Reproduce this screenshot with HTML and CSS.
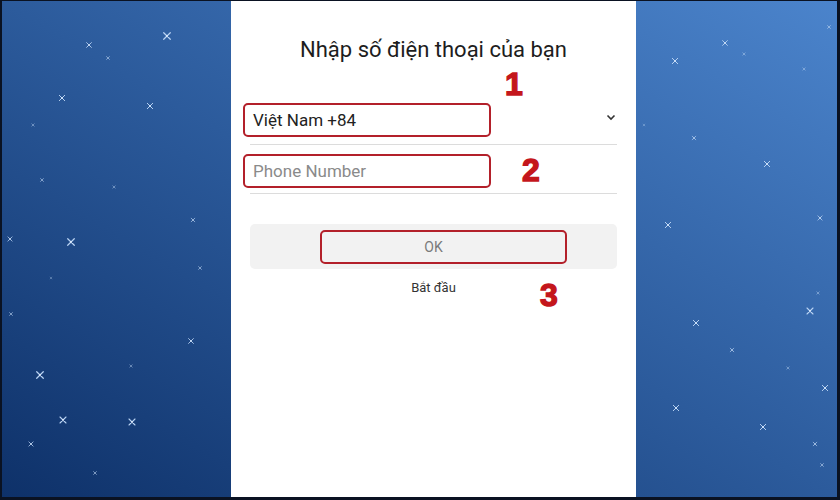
FILE: index.html
```html
<!DOCTYPE html>
<html lang="vi">
<head>
  <meta charset="UTF-8" />
  <meta name="viewport" content="width=device-width, initial-scale=1.0" />
  <title>Nhập số điện thoại</title>
  <link rel="stylesheet" href="styles.css">
</head>
<body>
  <div class="screen">
    <div class="side">
      <svg class="stars" width="229" height="496" viewBox="0 0 229 496">
        <defs>
          <g id="star">
            <path d="M-3 -3L3 3M-3 3L3 -3" stroke="#b9d3f3" stroke-width="1.1" stroke-linecap="round" />
            <circle r="0.9" fill="#e4efff" />
          </g>
        </defs>
        <use href="#star" transform="translate(165 35) scale(1.1)" />
        <use href="#star" transform="translate(87 44) scale(0.8)" />
        <use href="#star" transform="translate(106 57) scale(0.5)" />
        <use href="#star" transform="translate(60 97) scale(0.9)" />
        <use href="#star" transform="translate(148 105) scale(0.9)" />
        <use href="#star" transform="translate(31 124) scale(0.4)" />
        <use href="#star" transform="translate(40 179) scale(0.5)" />
        <use href="#star" transform="translate(112 186) scale(0.4)" />
        <use href="#star" transform="translate(191 219) scale(0.6)" />
        <use href="#star" transform="translate(8 238) scale(0.7)" />
        <use href="#star" transform="translate(69 241) scale(1.1)" />
        <use href="#star" transform="translate(198 267) scale(0.5)" />
        <use href="#star" transform="translate(49 277) scale(0.3)" />
        <use href="#star" transform="translate(9 313) scale(0.5)" />
        <use href="#star" transform="translate(189 340) scale(0.8)" />
        <use href="#star" transform="translate(38 374) scale(1.1)" />
        <use href="#star" transform="translate(129 365) scale(0.4)" />
        <use href="#star" transform="translate(61 419) scale(1)" />
        <use href="#star" transform="translate(130 421) scale(1)" />
        <use href="#star" transform="translate(29 443) scale(0.7)" />
        <use href="#star" transform="translate(93 472) scale(0.5)" />
      </svg>
    </div>

    <main class="panel">
      <h1 class="title">Nhập số điện thoại của bạn</h1>
      <span class="step step-1">1</span>

      <div class="field field-country">
        <span class="mark">Việt Nam +84</span>
        <svg class="chevron" width="10" height="7" viewBox="0 0 10 7">
          <path d="M1.5 1.5L5 5L8.5 1.5" fill="none" stroke="#333" stroke-width="1.6" />
        </svg>
      </div>

      <div class="field field-phone">
        <span class="mark placeholder">Phone Number</span>
        <span class="step step-2">2</span>
      </div>

      <div class="btn-ok">
        <span>OK</span>
        <span class="mark-ok"></span>
      </div>

      <div class="start">
        <span>Bắt đầu</span>
        <span class="step step-3">3</span>
      </div>
    </main>

    <div class="side">
      <svg class="stars" width="201" height="496" viewBox="0 0 201 496">
        <defs>
          <g id="star-r">
            <path d="M-3 -3L3 3M-3 3L3 -3" stroke="#b9d3f3" stroke-width="1.1" stroke-linecap="round" />
            <circle r="0.9" fill="#e4efff" />
          </g>
        </defs>
        <use href="#star-r" transform="translate(193 26) scale(0.5)" />
        <use href="#star-r" transform="translate(89 42) scale(0.8)" />
        <use href="#star-r" transform="translate(39 60) scale(0.9)" />
        <use href="#star-r" transform="translate(108 53) scale(0.4)" />
        <use href="#star-r" transform="translate(168 68) scale(0.4)" />
        <use href="#star-r" transform="translate(8 124) scale(0.3)" />
        <use href="#star-r" transform="translate(58 137) scale(0.6)" />
        <use href="#star-r" transform="translate(131 163) scale(0.9)" />
        <use href="#star-r" transform="translate(32 224) scale(0.9)" />
        <use href="#star-r" transform="translate(184 217) scale(0.7)" />
        <use href="#star-r" transform="translate(182 292) scale(0.4)" />
        <use href="#star-r" transform="translate(174 310) scale(1)" />
        <use href="#star-r" transform="translate(60 322) scale(0.9)" />
        <use href="#star-r" transform="translate(96 349) scale(0.6)" />
        <use href="#star-r" transform="translate(152 367) scale(0.4)" />
        <use href="#star-r" transform="translate(189 387) scale(0.9)" />
        <use href="#star-r" transform="translate(40 407) scale(0.9)" />
        <use href="#star-r" transform="translate(127 426) scale(0.9)" />
        <use href="#star-r" transform="translate(179 443) scale(0.6)" />
        <use href="#star-r" transform="translate(186 464) scale(0.5)" />
      </svg>
    </div>
  </div>
</body>
</html>
```

FILE: styles.css
```css
body {
  margin: 0;
  font-family: Roboto, "Liberation Sans", sans-serif;
}
.screen {
  display: flex;
  width: 840px;
  height: 500px;
  box-sizing: border-box;
  border-style: solid;
  border-color: #0a1222;
  border-width: 1px 3px 3px 2px;
  background: linear-gradient(to top right, #0e3169, #2c5b9c 50%, #4b84cc);
}
.side {
  flex: none;
  overflow: hidden;
}
.side:first-child {
  width: 229px;
}
.side:last-child {
  width: 201px;
}
.stars {
  display: block;
}
.panel {
  position: relative;
  width: 405px;
  flex: none;
  box-sizing: border-box;
  padding: 0 19px;
  background: #fff;
}
.title {
  margin: 35px 0 0;
  font-size: 22px;
  font-weight: 400;
  line-height: 28px;
  text-align: center;
  color: #1d1d1d;
}
.step {
  position: absolute;
  font-family: "Liberation Sans", sans-serif;
  font-size: 32px;
  font-weight: 700;
  line-height: 1;
  color: #c4161c;
  -webkit-text-stroke: 1.4px #c4161c;
}
.step-1 {
  left: 274px;
  top: 67px;
}
.field {
  position: relative;
  display: flex;
  align-items: flex-start;
  border-bottom: 1px solid #dcdcdc;
}
.field-country {
  margin-top: 39px;
  height: 41px;
}
.field-phone {
  margin-top: 9px;
  height: 39px;
}
.mark {
  display: flex;
  align-items: center;
  width: 248px;
  height: 34px;
  box-sizing: border-box;
  margin-left: -7px;
  padding-left: 8px;
  border: 2px solid #b3202a;
  border-radius: 5px;
  font-size: 17px;
  color: #222;
}
.placeholder {
  color: #8a8a8a;
}
.chevron {
  margin: 11px 0 0 auto;
  padding-right: 1px;
}
.step-2 {
  left: 272px;
  top: 0;
}
.btn-ok {
  position: relative;
  display: flex;
  align-items: center;
  justify-content: center;
  margin-top: 30px;
  height: 45px;
  border-radius: 5px;
  background: #f2f2f2;
  font-size: 14px;
  color: #7a7a7a;
}
.mark-ok {
  position: absolute;
  left: 70px;
  top: 6px;
  width: 247px;
  height: 34px;
  box-sizing: border-box;
  border: 2px solid #b3202a;
  border-radius: 5px;
}
.start {
  position: relative;
  margin-top: 10px;
  font-size: 13px;
  line-height: 18px;
  text-align: center;
  color: #333;
}
.step-3 {
  left: 290px;
  top: 0;
}
```
